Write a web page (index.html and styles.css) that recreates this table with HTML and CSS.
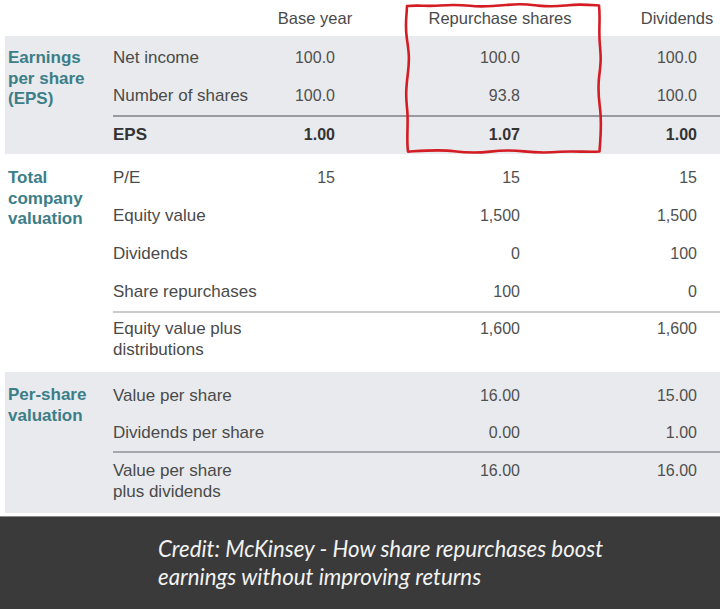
FILE: index.html
```html
<!DOCTYPE html>
<html lang="en">
<head>
<meta charset="utf-8">
<title>Share repurchases vs dividends</title>
<link rel="stylesheet" href="styles.css">
</head>
<body>
<div class="page">
  <div class="chart">
    <div class="head">
      <div class="hcell"><span>Base year</span></div>
      <div class="hcell"><span>Repurchase shares</span></div>
      <div class="hcell"><span>Dividends</span></div>
    </div>

    <section class="sec sec-eps gray">
      <div class="sec-title">Earnings<br>per share<br>(EPS)</div>
      <div class="rows">
        <div class="row"><div class="lbl">Net income</div><div class="num">100.0</div><div class="num">100.0</div><div class="num">100.0</div></div>
        <div class="row"><div class="lbl">Number of shares</div><div class="num">100.0</div><div class="num">93.8</div><div class="num">100.0</div></div>
        <div class="row row-total bold"><div class="lbl">EPS</div><div class="num">1.00</div><div class="num">1.07</div><div class="num">1.00</div></div>
      </div>
    </section>

    <section class="sec sec-total">
      <div class="sec-title">Total<br>company<br>valuation</div>
      <div class="rows">
        <div class="row"><div class="lbl">P/E</div><div class="num">15</div><div class="num">15</div><div class="num">15</div></div>
        <div class="row"><div class="lbl">Equity value</div><div class="num"></div><div class="num">1,500</div><div class="num">1,500</div></div>
        <div class="row"><div class="lbl">Dividends</div><div class="num"></div><div class="num">0</div><div class="num">100</div></div>
        <div class="row"><div class="lbl">Share repurchases</div><div class="num"></div><div class="num">100</div><div class="num">0</div></div>
        <div class="row row-multi light"><div class="lbl">Equity value plus<br>distributions</div><div class="num"></div><div class="num">1,600</div><div class="num">1,600</div></div>
      </div>
    </section>

    <section class="sec sec-per gray">
      <div class="sec-title">Per-share<br>valuation</div>
      <div class="rows">
        <div class="row"><div class="lbl">Value per share</div><div class="num"></div><div class="num">16.00</div><div class="num">15.00</div></div>
        <div class="row row-second"><div class="lbl">Dividends per share</div><div class="num"></div><div class="num">0.00</div><div class="num">1.00</div></div>
        <div class="row row-multi"><div class="lbl">Value per share<br>plus dividends</div><div class="num"></div><div class="num">16.00</div><div class="num">16.00</div></div>
      </div>
    </section>

    <svg class="highlight" width="214" height="160" viewBox="0 0 214 160" aria-hidden="true">
      <path fill="none" stroke="#d41c24" stroke-width="2.6" stroke-linejoin="round" stroke-linecap="round"
        d="M9,6 C20,5 30,6.5 42,5.5 S60,4.5 72,5.8 S95,6.2 108,5 S125,4.2 140,5.6 S158,6.4 170,5.2 S188,4.6 201,5.5
           C202.5,18 200.5,30 201.8,44 S203,62 201.2,76 S200.6,96 202.2,110 S203,132 201.5,151.5
           C190,152.5 176,150.6 162,151.8 S140,153 126,151.4 S104,150.2 92,151.6 S70,153 56,151.2 S30,150.4 10,151.6
           C8.2,138 10.6,124 9.2,110 S7.8,90 9.8,74 S10.8,52 8.8,38 S8.6,18 9,6 Z"/>
    </svg>
  </div>

  <div class="credit">
    <p>Credit: McKinsey - How share repurchases boost<br>earnings without improving returns</p>
  </div>
</div>
</body>
</html>
```

FILE: styles.css
```css
* { box-sizing: border-box; }

html, body {
  margin: 0;
  padding: 0;
  background: #ffffff;
}

.page {
  width: 720px;
  height: 609px;
  overflow: hidden;
  font-family: "Liberation Sans", Arial, sans-serif;
  color: #4a4a4a;
  display: flex;
  flex-direction: column;
}

.chart {
  position: relative;
  padding-bottom: 3px;
}

.head {
  display: grid;
  grid-template-columns: 273px 62px 185px 177px 23px;
  height: 36px;
  align-items: center;
  font-size: 16.5px;
  color: #4a4a4a;
}

.hcell {
  display: flex;
  justify-content: flex-end;
}
.hcell:nth-child(1) { grid-column: 2; }
.hcell:nth-child(2) { grid-column: 3; }
.hcell:nth-child(3) { grid-column: 4; }

.hcell span {
  width: 40px;
  display: flex;
  justify-content: center;
  white-space: nowrap;
}

.sec {
  display: flex;
  margin-left: 5px;
}

.gray { background: #e8eaed; }

.sec-title {
  width: 108px;
  padding-left: 3px;
  font-weight: bold;
  font-size: 17px;
  line-height: 20.5px;
  color: #3c7e88;
}

.rows {
  flex: 1;
  display: flex;
  flex-direction: column;
}

.row {
  display: grid;
  grid-template-columns: 160px 62px 185px 177px;
  height: 38px;
  align-items: center;
  font-size: 17px;
}

.num {
  text-align: right;
  font-size: 16px;
  color: #505050;
}

.bold .lbl, .bold .num {
  font-weight: bold;
  color: #333333;
}

.row-total {
  border-top: 2px solid #979ba0;
  height: 37px;
}

.row-multi {
  height: auto;
  align-items: start;
  line-height: 21px;
  border-top: 2px solid #a4a8ac;
}
.row-multi.light { border-top-color: #c9cbce; }

/* section vertical spacing */
.sec-eps { padding: 3px 0 2px; }
.sec-eps .sec-title { padding-top: 9px; }

.sec-total { padding: 5px 0 0; }
.sec-total .sec-title { padding-top: 9px; }
.sec-total .row-multi { padding: 5px 0 12px; }

.sec-per { padding: 5px 0 0; }
.sec-per .sec-title { padding-top: 8px; }
.sec-per .row { height: 37.5px; }
.sec-per .row-second { height: 36px; }
.sec-per .row-multi { height: auto; padding: 7px 0 11px; }

.highlight {
  position: absolute;
  left: 398px;
  top: 0;
}

.credit {
  flex: 1;
  background: #3a3a3a;
  border-top: 1px solid #8a8a8a;
  padding: 18px 0 0 158px;
}

.credit p {
  margin: 0;
  font-family: "Lato", "Open Sans", sans-serif;
  font-style: italic;
  font-size: 22.3px;
  line-height: 28px;
  color: #f2f2f2;
}
```
